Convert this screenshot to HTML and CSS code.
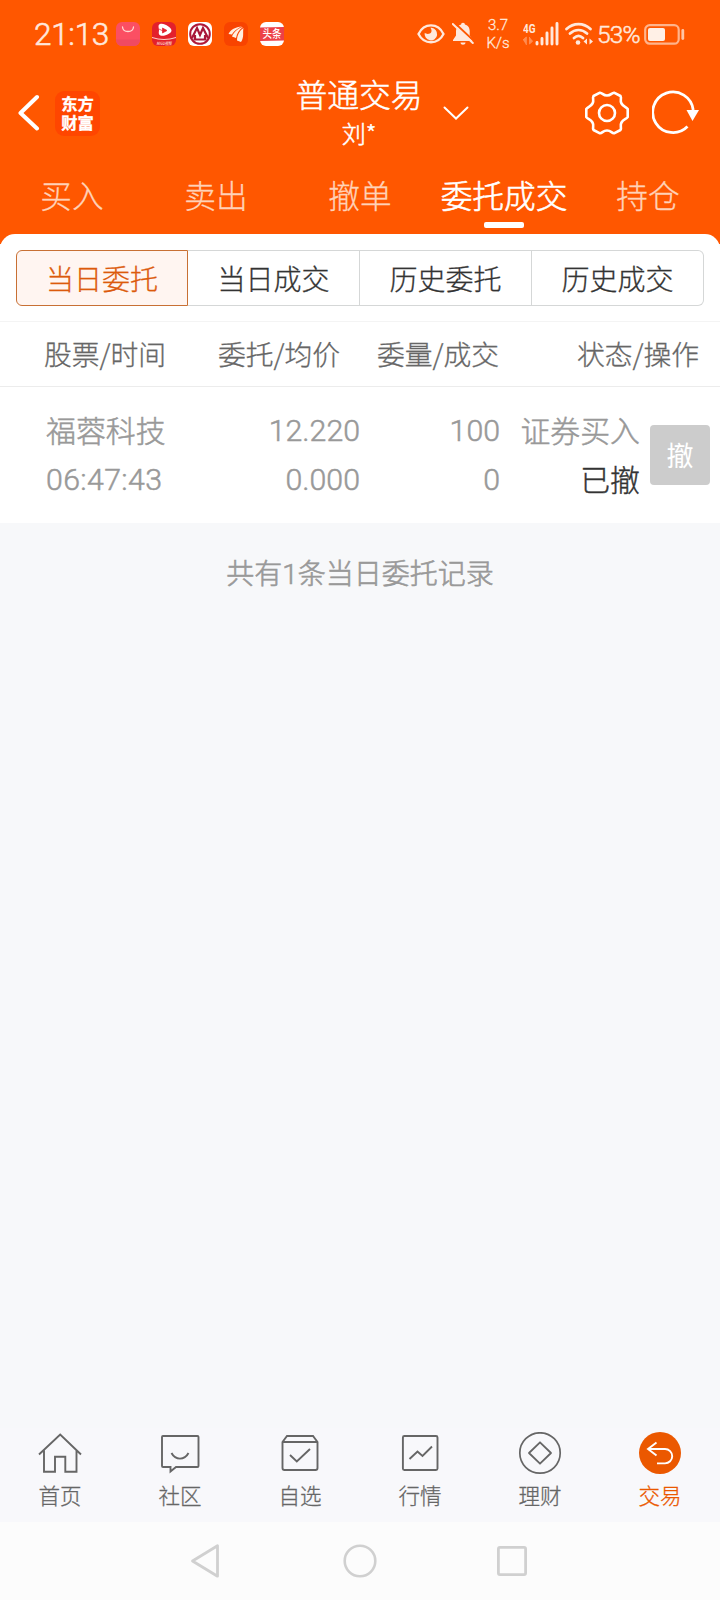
FILE: index.html
```html
<!DOCTYPE html>
<html lang="zh-CN">
<head>
<meta charset="utf-8">
<title>普通交易</title>
<link rel="stylesheet" href="styles.css">
</head>
<body>
<div class="screen">
  <header class="top">
    <div class="status">
      <span class="clock">21:13</span>
      <div class="apps">
        <svg width="24" height="24" viewBox="0 0 24 24"><rect width="24" height="24" rx="6" fill="#fb4f63"/><path d="M0 17.500h24v.5a6 6 0 0 1-6 6H6a6 6 0 0 1-6-6z" fill="#f04a62"/><path d="M6.500 5c.5 6 10.500 6 11 0" fill="none" stroke="#ffd9d2" stroke-width="1.300" stroke-linecap="round"/></svg>
        <svg width="24" height="24" viewBox="0 0 24 24"><rect width="24" height="24" rx="6" fill="#e3202c"/><path d="M8 2c-2.500 1-1 4-1 6s-1 4.500 1.500 5.500c3.500 1.500 11-2 11-5S12 .5 8 2z" fill="#fff"/><path d="M10.500 6l4.500 2.500-4.500 2.500zM7 7l4 2" fill="#e3202c" stroke="#e3202c" stroke-width=".7"/><path d="M0 15.500q12 4 24 0" fill="none" stroke="#ffd0c8"/><text x="12" y="22.500" class="tiny-label" textLength="15" lengthAdjust="spacingAndGlyphs">MIGU视频</text></svg>
        <svg width="24" height="24" viewBox="0 0 24 24"><rect width="24" height="24" rx="6" fill="#fff"/><circle cx="12" cy="12" r="9.800" fill="none" stroke="#b01838" stroke-width="2"/><path d="M4 16L9 6l3 7 3-7 5 10M7 13v4M17 13v4M5.500 17.500h13" fill="none" stroke="#a8183a" stroke-width="2.200"/></svg>
        <svg width="24" height="24" viewBox="0 0 24 24"><rect width="24" height="24" rx="6" fill="#f84300"/><path d="M4.500 12c2-4.500 7-7 13.500-7.500-3 1-8 4-10 8zM8 14.500C10 10 14 6 19 5c-4 3-6 6-7 11zM13 18.500c0-5.500 3-10.500 6.500-12.500-1 4 1 9-2.500 14z" fill="#ffefe0"/></svg>
        <svg width="24" height="24" viewBox="0 0 24 24"><rect width="24" height="24" rx="6" fill="#fff"/><path d="M0 5.500l24-.5v13.500l-24 .5z" fill="#ed4047"/><text x="12" y="16" class="news-label" textLength="19" lengthAdjust="spacingAndGlyphs">头条</text></svg>
      </div>
      <div class="indicators">
        <svg class="eye" width="28" height="20" viewBox="0 0 28 20"><path d="M1.500 10C7-1.500 21-1.500 26.500 10 21 21 7 21 1.500 10z" fill="none" stroke="#ffe8dc" stroke-width="2.300"/><path d="M14.500 3.800a6.300 6.300 0 1 1-6.800 5c1.500 1.700 5.500 1.500 6.500-.5.700-1.500.3-3-.7-4.500z" fill="#ffe8dc"/></svg>
        <svg class="bell" width="22" height="24" viewBox="0 0 22 24"><path d="M11 .8c1.300 0 1.800.8 1.900 1.800 3.500 1 4.800 3.700 4.800 6.400v4.500l3 4.500v1H1v-1l3-4.500V9c0-2.700 1.600-5.400 5.100-6.400.1-1 .6-1.800 1.900-1.800zM8.500 20.500h5c0 3-5 3-5 0z" fill="#ffe8dc"/><path d="M2.200 .5L22 19" stroke="#ff5700" stroke-width="2"/><path d="M.8 2L20.800 21" stroke="#ffe8dc" stroke-width="2" stroke-linecap="round"/></svg>
        <div class="speed"><span>3.7</span><span>K/s</span></div>
        <svg class="signal" width="36" height="24" viewBox="0 0 36 24"><text x="0" y="10.500" class="net-label" textLength="12.500" lengthAdjust="spacingAndGlyphs">4G</text><path d="M0 18l3.300-3v8M9.800 19L6.500 22v-7" fill="#ff8d51" stroke="#ff8d51"/><path d="M14 20.500V22M19 16.500V22M24 11V22M29 6V22M34 1.500V22" stroke="#ffe8dc" stroke-width="2.900" stroke-linecap="round"/></svg>
        <svg class="wifi" width="28" height="24" viewBox="0 0 28 24"><g fill="none" stroke="#ffe8dc" stroke-width="2.700" stroke-linecap="round"><path d="M1.500 7c7-6.500 17-6.500 24 0M5 11.500c5-4.700 12-4.700 17 0M9 16c3-2.800 6-2.800 9 0"/></g><circle cx="13" cy="20.500" r="2.300" fill="#ffe8dc"/><path d="M18.500 19.500l3.500-3v6zM28 19.500l-3.500 3v-6z" fill="#ffe8dc"/></svg>
        <span class="percent">53%</span>
        <svg class="battery" width="42" height="21" viewBox="0 0 42 21"><rect x="1.200" y="1.200" width="33.500" height="18.500" rx="4.500" fill="none" stroke="#ffb48c" stroke-width="2.200"/><rect x="4" y="4" width="17" height="13" rx="2" fill="#fff0e6"/><path d="M38.800 6.500v8" stroke="#ffc5a6" stroke-width="2.800" stroke-linecap="round"/></svg>
      </div>
    </div>

    <div class="titlebar">
      <svg class="back" width="22" height="38" viewBox="0 0 22 38"><path d="M19 3L2.500 19 19 34.500" fill="none" stroke="#fff" stroke-width="4" stroke-linecap="round" stroke-linejoin="round"/></svg>
      <div class="brand">东方<br>财富</div>
      <div class="title"><span class="title-main">普通交易</span><span class="title-sub">刘*</span></div>
      <svg class="chevron" width="26" height="15" viewBox="0 0 26 15"><path d="M1.500 1.500L13 12.500 24.500 1.500" fill="none" stroke="#fff" stroke-width="2" stroke-linecap="round"/></svg>
      <svg class="gear" width="46" height="46" viewBox="-23 -23 46 46"><g fill="none" stroke="#fff" stroke-width="2.600" stroke-linejoin="round"><path d="M-7-20.300C-4.500-20-4-17.500 0-17.500S4.500-20 7-20.300L13.500-17C15-14 12.500-13 14.500-9.500S19-6.500 20.700-4V4C19 6.500 16.500 6 14.500 9.500S15 14 13.500 17L7 20.300C4.500 20 4 17.500 0 17.500S-4.500 20-7 20.300L-13.500 17C-15 14-12.500 13-14.500 9.500S-19 6.500-20.700 4V-4C-19-6.500-16.500-6-14.500-9.500S-15-14-13.500-17z"/><circle r="8"/></g></svg>
      <svg class="refresh" width="48" height="46" viewBox="0 0 48 46"><path d="M35.500 36.500A20.300 20.300 0 1 1 41.200 20" fill="none" stroke="#fff" stroke-width="2.800"/><path d="M34.500 20H47l-6.500 11z" fill="#fff"/></svg>
    </div>

    <nav class="tabs">
      <a class="tab">买入</a><a class="tab">卖出</a><a class="tab">撤单</a><a class="tab tab-on">委托成交</a><a class="tab">持仓</a>
    </nav>
  </header>

  <main class="sheet">
    <div class="segments">
      <div class="segment segment-on">当日委托</div><div class="segment">当日成交</div><div class="segment">历史委托</div><div class="segment">历史成交</div>
    </div>
    <div class="cols head">
      <span>股票/时间</span><span>委托/均价</span><span>委量/成交</span><span>状态/操作</span>
    </div>
    <div class="cols order">
      <div><span>福蓉科技</span><span class="num time">06:47:43</span></div>
      <div><span class="num">12.220</span><span class="num">0.000</span></div>
      <div><span class="num">100</span><span class="num">0</span></div>
      <div><span>证券买入</span><span class="done">已撤</span></div>
      <button class="cancel">撤</button>
    </div>
  </main>

  <p class="summary">共有<span class="num">1</span>条当日委托记录</p>

  <nav class="dock">
    <a class="dock-item"><svg width="44" height="44" viewBox="0 0 44 44"><path d="M1 22.500L22.200 2.500 43 22.500M6 18V39.700H17V24.700H27.300V39.700H38.500V18" fill="none" stroke="#666" stroke-width="1.900"/></svg><span>首页</span></a>
    <a class="dock-item"><svg width="44" height="44" viewBox="0 0 44 44"><path d="M5 4H39.500a1 1 0 0 1 1 1V34a1 1 0 0 1-1 1H18L12.500 39.500V35H5a1 1 0 0 1-1-1V5a1 1 0 0 1 1-1zM13.500 21c4 7.500 13 7.500 17 0" fill="none" stroke="#666" stroke-width="1.900"/></svg><span>社区</span></a>
    <a class="dock-item"><svg width="44" height="44" viewBox="0 0 44 44"><path d="M4.500 10L9 4H35L39.500 10V36a2 2 0 0 1-2 2h-31a2 2 0 0 1-2-2zM4.500 10H39.500M12 23l6.800 6.500L32 17" fill="none" stroke="#666" stroke-width="1.900"/></svg><span>自选</span></a>
    <a class="dock-item"><svg width="44" height="44" viewBox="0 0 44 44"><rect x="4.900" y="4" width="34.600" height="34" rx="1.500" fill="none" stroke="#666" stroke-width="1.900"/><path d="M11.500 27L19.500 19.500 24.500 24 34 14.500" fill="none" stroke="#666" stroke-width="1.900"/></svg><span>行情</span></a>
    <a class="dock-item"><svg width="44" height="44" viewBox="0 0 44 44"><circle cx="22" cy="21" r="20.200" fill="none" stroke="#666" stroke-width="1.700"/><path d="M22 10.300L33 21 22 31.700 11 21z" fill="none" stroke="#666" stroke-width="1.800" stroke-linejoin="round"/></svg><span>理财</span></a>
    <a class="dock-item dock-on"><svg width="44" height="44" viewBox="0 0 44 44"><circle cx="22" cy="21" r="21" fill="#eb5800"/><path d="M18.500 10.500L10 17 18.500 23.500M10 17H27a7.200 7.200 0 0 1 0 14.400H19" fill="none" stroke="#fff" stroke-width="1.900"/></svg><span>交易</span></a>
  </nav>

  <div class="system">
    <svg width="30" height="36" viewBox="0 0 30 36"><path d="M27.500 2.800V33.200L2.500 18z" fill="none" stroke="#d0d0d0" stroke-width="2.800" stroke-linejoin="round"/></svg>
    <svg width="34" height="34" viewBox="0 0 34 34"><circle cx="17" cy="17" r="15.300" fill="none" stroke="#d0d0d0" stroke-width="2.600"/></svg>
    <svg width="30" height="30" viewBox="0 0 30 30"><rect x="1.400" y="1.400" width="27.200" height="27.200" rx="1.500" fill="none" stroke="#d0d0d0" stroke-width="2.800"/></svg>
  </div>
</div>
</body>
</html>
```
FILE: styles.css
```css
* { box-sizing: border-box; }
body {
  margin: 0;
  font-family: "Noto Sans CJK SC", sans-serif;
  font-weight: 300;
  -webkit-text-stroke: 0.3px currentColor;
}
.screen {
  width: 720px;
  height: 1600px;
  display: flex;
  flex-direction: column;
  background: #f7f8fa;
  overflow: hidden;
}
svg { display: block; flex: none; }
svg text { -webkit-text-stroke: 0; }
.num { font-family: Roboto, sans-serif; font-weight: 300; }

.top { height: 244px; flex: none; background: #ff5700; color: #fff; }

/* status bar */
.status { height: 68px; display: flex; align-items: center; padding-left: 34px; color: #ffe8dc; }
.clock { width: 82px; font: 300 31.500px/68px Roboto, sans-serif; letter-spacing: -0.3px; padding-top: 1px; -webkit-text-stroke-width: 0.6px; }
.apps { display: flex; gap: 12px; }
.tiny-label { font: italic 500 4.500px "Noto Sans CJK SC", sans-serif; fill: #ffe0da; text-anchor: middle; }
.news-label { font: 500 11px "Noto Sans CJK SC", sans-serif; fill: #fff; text-anchor: middle; }
.net-label { font: 700 13px Roboto, sans-serif; fill: #ffe8dc; }
.indicators { display: flex; align-items: center; margin-left: 133px; }
.bell { margin-left: 7px; }
.speed { width: 24px; margin-left: 12px; display: flex; flex-direction: column; align-items: center; font: 300 15px/18px Roboto, sans-serif; }
.signal { margin-left: 13px; }
.wifi { margin-left: 6px; }
.percent { width: 44px; margin-left: 4px; font: 300 24.500px/30px Roboto, sans-serif; letter-spacing: -0.9px; padding-top: 2px; -webkit-text-stroke-width: 0.5px; }
.battery { margin-left: 3px; }

/* title bar */
.titlebar { height: 90px; display: flex; align-items: center; padding-left: 18px; }
.brand {
  width: 45px; height: 45px; margin-left: 15px; padding-top: 3px; border-radius: 9px; background: #ff4600;
  text-align: center; font-size: 16.300px; font-weight: 700; line-height: 19.500px;
}
.title { width: 128px; margin-left: 195px; margin-bottom: 2px; display: flex; flex-direction: column; align-items: center; }
.title-main { font-size: 31.800px; line-height: 42px; margin-top: -2px; -webkit-text-stroke-width: 0.5px; }
.title-sub { font-size: 24px; line-height: 37px; -webkit-text-stroke-width: 0.5px; }
.chevron { margin-left: 20px; }
.gear { margin-left: 115px; }
.refresh { margin-left: 22px; }

/* main tabs */
.tabs { height: 76px; display: flex; }
.tab { flex: 1; display: flex; justify-content: center; font-size: 31.700px; line-height: 73px; color: #ffd2b8; position: relative; white-space: nowrap; }
.tab-on { color: #fff; -webkit-text-stroke-width: 0.6px; }
.tab-on::after { content: ""; position: absolute; left: 52px; bottom: 6px; width: 40px; height: 6px; border-radius: 2px; background: #fff; }

/* orders */
.sheet { flex: none; height: 289px; margin-top: -10px; padding-top: 16px; background: #fff; border-radius: 15px 15px 0 0; position: relative; }
.segments { display: flex; height: 56px; margin: 0 16px 15px; }
.segment { width: 172px; border: 1px solid #d5d7d7; border-left-width: 0; font-size: 28px; line-height: 54px; text-align: center; color: #333; }
.segment:last-child { border-radius: 0 6px 6px 0; }
.segment-on { border: 1px solid #c87034; border-radius: 6px 0 0 6px; background: #fff5f1; color: #dc5a0c; }
.cols { display: flex; white-space: nowrap; }
.head { height: 66px; border-top: 1px solid #f4f4f4; border-bottom: 1px solid #ececec; font-size: 27.800px; line-height: 62px; color: #666; }
.head span { width: 122px; margin-left: 52px; }
.head span:nth-child(1) { margin-left: 44px; }
.head span:nth-child(3) { margin-left: 37px; }
.head span:nth-child(4) { margin-left: 78px; }
.order { padding-top: 18px; font-size: 29.900px; line-height: 49px; color: #999; }
.order > div { display: flex; flex-direction: column; text-align: right; -webkit-text-stroke-width: 0.5px; }
.order > div:nth-child(1) { width: 120px; margin-left: 46px; text-align: left; }
.order > div:nth-child(2) { width: 194px; }
.order > div:nth-child(3) { width: 140px; }
.order > div:nth-child(4) { width: 140px; }
.order .num { font-size: 30.300px; padding-top: 3px; line-height: 46px; }
.order .time { letter-spacing: 0.350px; }
.order .done { color: #333; -webkit-text-stroke-width: 0.4px; }
.cancel { width: 60px; height: 60px; margin: 20px 0 0 10px; padding: 0; border: 0; border-radius: 4px; background: #ccc; color: #fff; font: 400 27px/58px "Noto Sans CJK SC", sans-serif; -webkit-text-stroke: 0; }

.summary { flex: 1; margin: 0; padding-top: 29px; text-align: center; font-size: 28px; line-height: 40px; color: #999; -webkit-text-stroke-width: 0.6px; }

/* bottom navigation */
.dock { flex: none; height: 94px; display: flex; background: #f8f8fb; }
.dock-item { flex: 1; display: flex; flex-direction: column; align-items: center; padding-top: 4px; color: #666; font-size: 21.500px; line-height: 37px; }
.dock-on { color: #eb5800; }
.system { flex: none; height: 78px; display: flex; align-items: center; padding-left: 190px; background: #fcfcfc; }
.system svg:nth-child(2) { margin-left: 123px; }
.system svg:nth-child(3) { margin-left: 120px; }
```
